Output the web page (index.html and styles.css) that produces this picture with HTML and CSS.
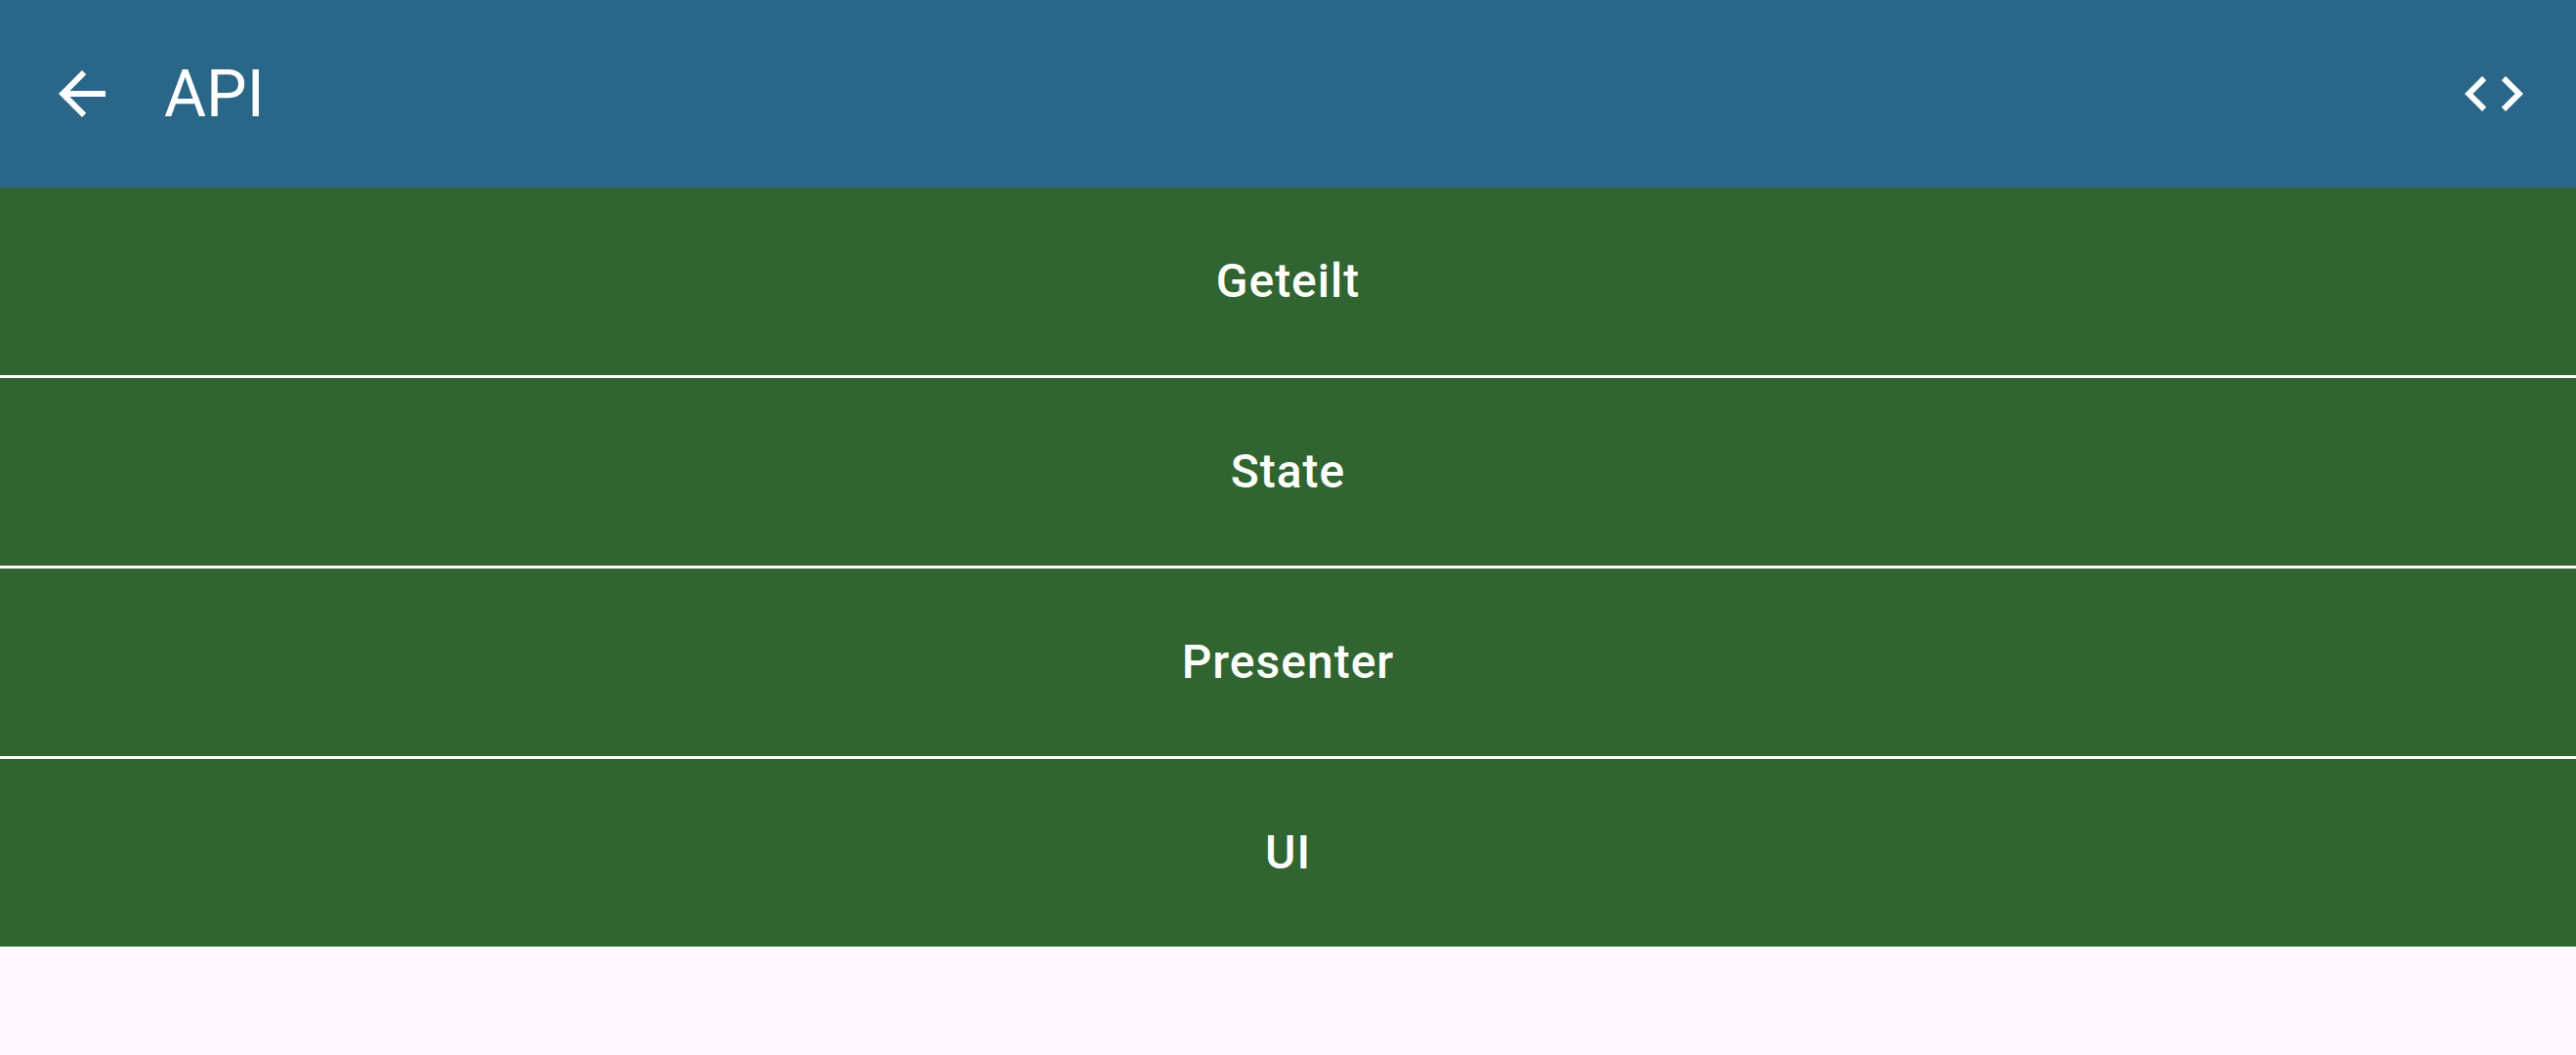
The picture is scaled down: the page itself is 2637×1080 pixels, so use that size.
FILE: index.html
```html
<!DOCTYPE html>
<html lang="de">
<head>
<meta charset="utf-8">
<title>API</title>
<link rel="stylesheet" href="styles.css">
</head>
<body>
<header class="app-bar">
  <button class="icon-button" type="button" aria-label="Zurück">
    <svg class="icon" viewBox="0 0 24 24" aria-hidden="true"><path d="M20 11H7.83l5.59-5.59L12 4l-8 8 8 8 1.41-1.41L7.83 13H20v-2z"/></svg>
  </button>
  <h1 class="title">API</h1>
  <button class="icon-button" type="button" aria-label="Code">
    <svg class="icon" viewBox="0 0 24 24" aria-hidden="true"><path d="M9.4 16.6L4.8 12l4.6-4.6L8 6l-6 6 6 6 1.4-1.4zm5.2 0l4.6-4.6-4.6-4.6L16 6l6 6-6 6-1.4-1.4z"/></svg>
  </button>
</header>
<main class="sections">
  <button class="section" type="button">Geteilt</button>
  <button class="section" type="button">State</button>
  <button class="section" type="button">Presenter</button>
  <button class="section" type="button">UI</button>
</main>
</body>
</html>
```
FILE: styles.css
```css
body {
  margin: 0;
  background: #fef7ff;
  font-family: Roboto, sans-serif;
}

button {
  margin: 0;
  border: 0;
  color: #fff;
  font-family: inherit;
  cursor: pointer;
}

.app-bar {
  display: flex;
  align-items: center;
  height: 192px;
  padding: 0 12px;
  background: #296688;
  color: #fff;
}

.icon-button {
  display: grid;
  place-items: center;
  width: 144px;
  height: 144px;
  padding: 0;
  background: none;
}

.icon {
  width: 72px;
  height: 72px;
  fill: currentColor;
}

.title {
  flex: 1;
  margin: 0 0 0 12px;
  font-size: 66px;
  line-height: 85px;
  font-weight: 400;
}

.sections {
  display: flex;
  flex-direction: column;
  gap: 3px;
  background: #fff;
}

.section {
  height: 192px;
  background: #306430;
  font-size: 48px;
  line-height: 72px;
  font-weight: 500;
  letter-spacing: 1px;
}
```
